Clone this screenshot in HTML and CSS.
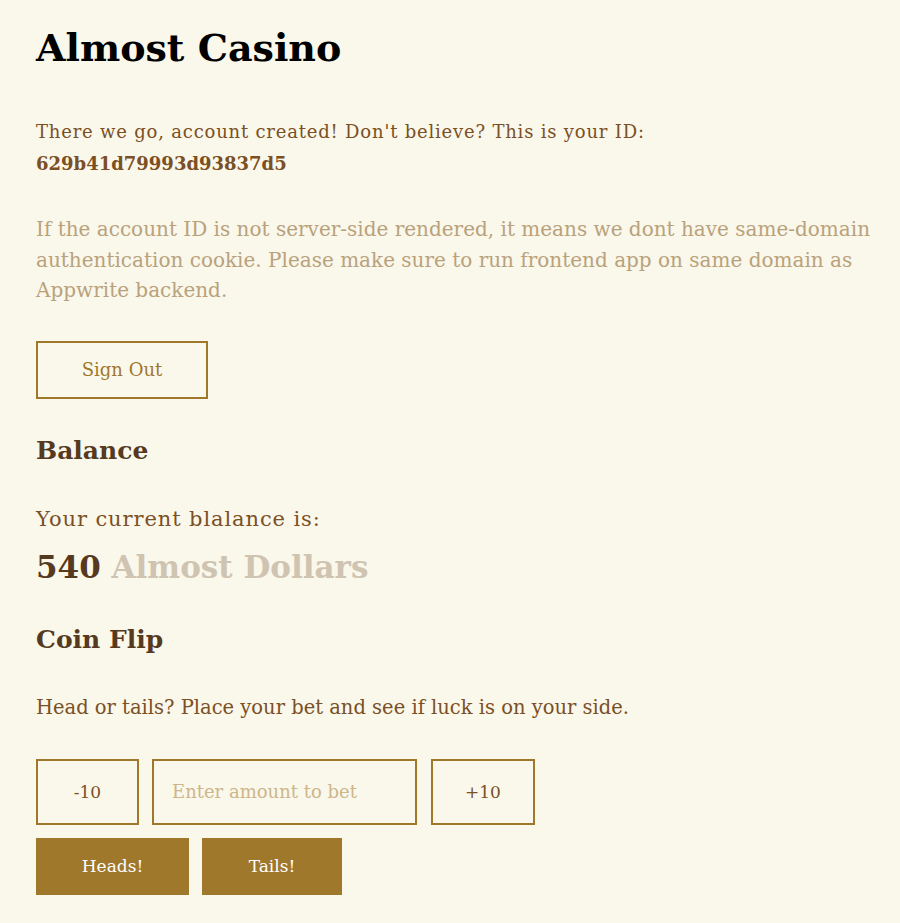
FILE: index.html
```html
<!DOCTYPE html>
<html lang="en">
<head>
<meta charset="utf-8">
<title>Almost Casino</title>
<link rel="stylesheet" href="styles.css">
</head>
<body>
<main class="page">
  <h1 class="title">Almost Casino</h1>
  <p class="intro">There we go, account created! Don't believe? This is your ID:<br><strong class="account-id">629b41d79993d93837d5</strong></p>
  <p class="note">If the account ID is not server-side rendered, it means we dont have same-domain authentication cookie. Please make sure to run frontend app on same domain as Appwrite backend.</p>
  <div class="signout-row"><button class="btn-outline signout">Sign Out</button></div>
  <h2 class="section-title balance-title">Balance</h2>
  <p class="text balance-label">Your current blalance is:</p>
  <p class="amount"><strong class="amount-value">540</strong> <span class="amount-unit">Almost Dollars</span></p>
  <h2 class="section-title coin-title">Coin Flip</h2>
  <p class="text coin-text">Head or tails? Place your bet and see if luck is on your side.</p>
  <div class="bet-row">
    <button class="btn-outline step step-minus">-10</button>
    <input class="bet-input" type="text" placeholder="Enter amount to bet">
    <button class="btn-outline step step-plus">+10</button>
  </div>
  <div class="choice-row">
    <button class="btn-fill heads">Heads!</button>
    <button class="btn-fill tails">Tails!</button>
  </div>
</main>
</body>
</html>
```

FILE: styles.css
```css
html, body {
  margin: 0;
  padding: 0;
  background: #faf7eb;
}
body {
  font-family: "DejaVu Serif", "Liberation Serif", serif;
  color: #7a5024;
}
.page {
  display: flex;
  flex-direction: column;
  align-items: flex-start;
  padding: 24px 16px 0 36px;
}
.title {
  margin: 0;
  font-size: 38px;
  line-height: 48px;
  font-weight: 700;
  color: #000;
}
.intro {
  margin: 44px 0 0 0;
  font-size: 18px;
  line-height: 32px;
  letter-spacing: 0.8px;
}
.account-id {
  font-weight: 700;
  letter-spacing: 0;
}
.note {
  margin: 34px 0 0 0;
  max-width: 842px;
  font-size: 20px;
  line-height: 30.5px;
  color: #b9a27b;
}
.signout-row { margin-top: 35px; }
.btn-outline {
  font-family: inherit;
  background: transparent;
  border: 2px solid #a0782c;
  color: #a0782c;
  font-size: 18px;
  cursor: pointer;
  padding: 0;
}
.signout {
  width: 172px;
  height: 58px;
}
.section-title {
  margin: 0;
  font-size: 25px;
  line-height: 36px;
  font-weight: 700;
  color: #553a1f;
}
.balance-title { margin-top: 34px; }
.text {
  margin: 0;
  line-height: 30px;
}
.balance-label {
  margin-top: 35px;
  font-size: 21px;
  letter-spacing: 0.9px;
}
.amount {
  margin: 13px 0 0 0;
  font-size: 31px;
  line-height: 40px;
  font-weight: 700;
}
.amount-value { color: #553a1f; }
.amount-unit { color: #cfc4b1; }
.coin-title { margin-top: 35px; }
.coin-text {
  margin-top: 35px;
  font-size: 19.5px;
}
.bet-row {
  display: flex;
  gap: 13px;
  margin-top: 36px;
}
.step {
  height: 66px;
  font-size: 17px;
  color: #7a5024;
}
.step-minus { width: 103px; }
.step-plus { width: 104px; margin-left: 1px; }
.bet-input {
  box-sizing: border-box;
  width: 265px;
  height: 66px;
  border: 2px solid #a0782c;
  background: transparent;
  font-family: inherit;
  font-size: 18px;
  padding: 0 18px;
  color: #7a5024;
  outline: none;
}
.bet-input::placeholder { color: #cdb68a; }
.choice-row {
  display: flex;
  gap: 13px;
  margin-top: 13px;
}
.btn-fill {
  font-family: inherit;
  height: 57px;
  border: none;
  background: #a0782c;
  color: #fff;
  font-size: 17px;
  padding: 0;
  cursor: pointer;
}
.heads { width: 153px; }
.tails { width: 140px; }
```
